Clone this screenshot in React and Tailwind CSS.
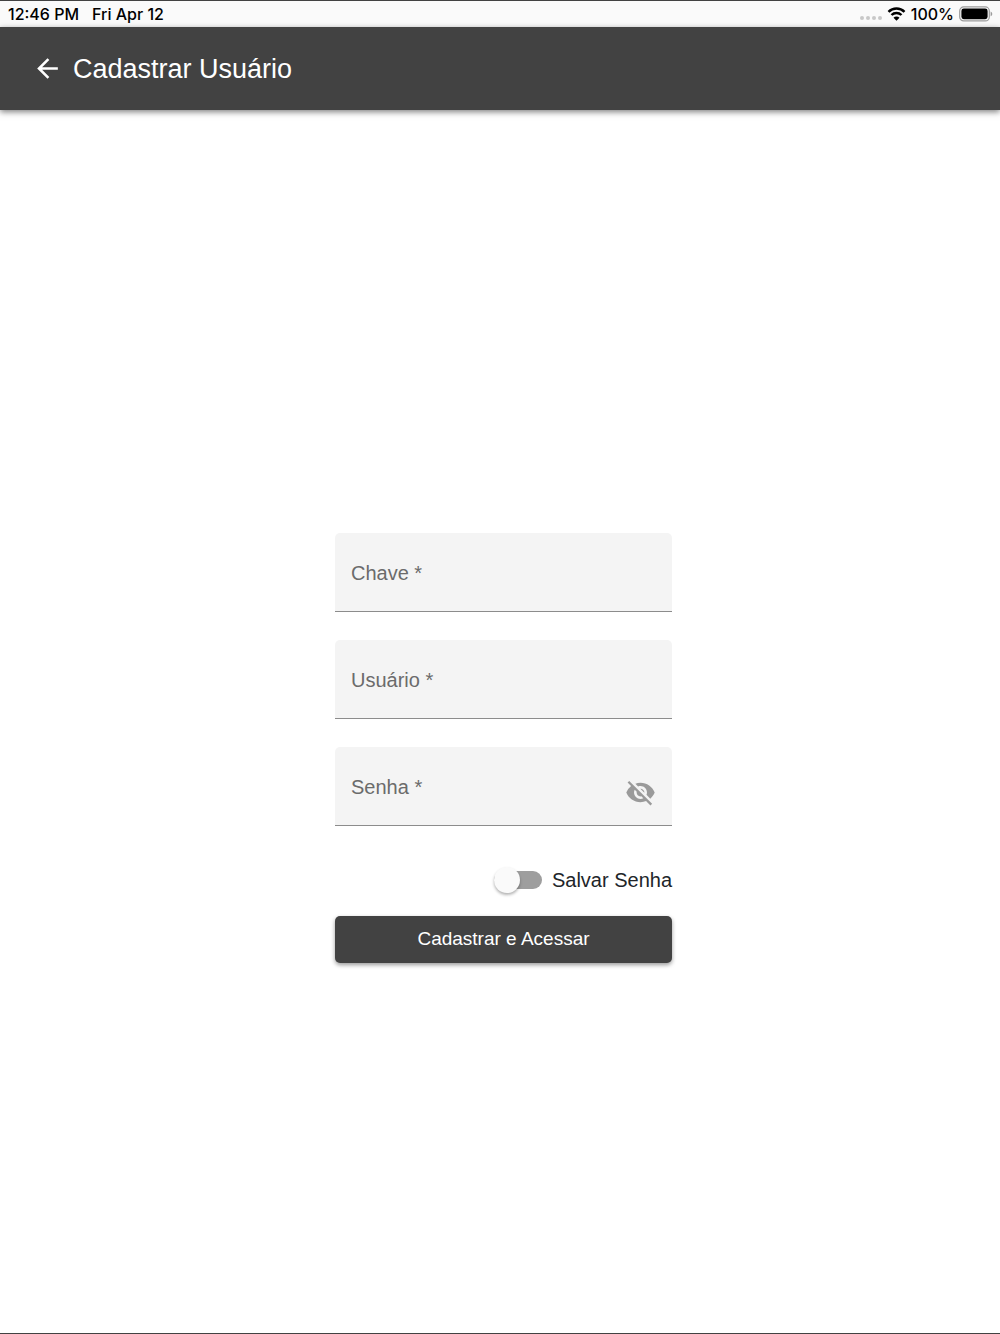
import { useState } from 'react';
import { MdArrowBack, MdVisibility, MdVisibilityOff } from 'react-icons/md';

/**
 * Tablet status bar: clock, signal, wifi and battery
 */
function StatusBar() {
  return (
    <div className="flex h-[26px] items-center justify-between bg-[#fafafa] pl-2 pr-[7px] font-['Inter',sans-serif] text-base font-medium leading-5 text-black">
      <div className="flex gap-[13px]">
        <span>12:46 PM</span>
        <span>Fri Apr 12</span>
      </div>

      <div className="flex items-center gap-[5px]">
        {/* Signal */}
        <svg width="22" height="14" viewBox="0 0 22 14" fill="#c8c8c8" aria-hidden="true">
          <circle cx="2" cy="11" r="2" />
          <circle cx="8" cy="11" r="2" />
          <circle cx="14" cy="11" r="2" />
          <circle cx="20" cy="11" r="2" />
        </svg>

        {/* Wifi */}
        <svg width="19" height="14" viewBox="0 0 18 14" fill="none" stroke="#000" aria-hidden="true">
          <path d="M1 4.9a11.3 11.3 0 0 1 16 0" strokeWidth="2.5" />
          <path d="M4 8a7.1 7.1 0 0 1 10 0" strokeWidth="2.4" />
          <path d="M9 13.8 6 10.7a4.2 4.2 0 0 1 6 0z" fill="#000" stroke="none" />
        </svg>

        <span>100%</span>

        {/* Battery */}
        <svg width="34" height="16" viewBox="0 0 34 16" aria-hidden="true">
          <rect x="0.7" y="0.9" width="29.6" height="14" rx="4" fill="none" stroke="#9c9c9c" strokeWidth="1.2" />
          <rect x="2.4" y="2.6" width="26.2" height="10.6" rx="2.4" fill="#000" />
          <path d="M31.6 5.5c2.2.8 2.2 4 0 4.8z" fill="#9c9c9c" />
        </svg>
      </div>
    </div>
  );
}

/**
 * Filled text field with a floating label
 * @param {Object} props
 * @param {string} props.id - Input id
 * @param {string} props.label - Field label
 * @param {string} props.type - Input type
 * @param {React.ReactNode} props.children - Suffix shown on the right
 */
function TextField({ id, label, type = 'text', children }) {
  return (
    <div className="relative flex h-[79px] items-center rounded-t-[5px] border-b border-[#8c8c8c] bg-[#f4f4f4] px-4">
      <input
        id={id}
        name={id}
        type={type}
        required
        placeholder=" "
        className="peer h-full min-w-0 flex-1 bg-transparent pt-6 text-xl text-black/85 outline-none"
      />
      <label
        htmlFor={id}
        className="pointer-events-none absolute left-4 top-3 text-base leading-6 text-[#6b6b6b] transition-all peer-placeholder-shown:top-7 peer-placeholder-shown:text-xl peer-placeholder-shown:leading-6 peer-focus:top-3 peer-focus:text-base"
      >
        {label} *
      </label>
      {children}
    </div>
  );
}

export default function App() {
  const [showPassword, setShowPassword] = useState(false);
  const [savePassword, setSavePassword] = useState(false);

  return (
    <div className="flex min-h-screen flex-col border-y border-[#424242] bg-white font-['Liberation_Sans',Arial,sans-serif]">
      <StatusBar />

      {/* Toolbar */}
      <header className="flex h-[83px] items-center gap-[10px] bg-[#424242] px-8 text-white shadow-[0_2px_6px_rgba(0,0,0,0.5)]">
        <button type="button" aria-label="Voltar">
          <MdArrowBack size={31} />
        </button>
        <h1 className="text-[27px] font-normal leading-8">Cadastrar Usuário</h1>
      </header>

      <main className="flex flex-1 items-center justify-center pl-[7px] pt-[53px]">
        <form className="flex w-[337px] flex-col gap-7" onSubmit={(e) => e.preventDefault()}>
          <TextField id="chave" label="Chave" />
          <TextField id="usuario" label="Usuário" />
          <TextField id="senha" label="Senha" type={showPassword ? 'text' : 'password'}>
            <button
              type="button"
              aria-label="Mostrar senha"
              onClick={() => setShowPassword(!showPassword)}
              className="mt-3 text-[#9a9a9a]"
            >
              {showPassword ? <MdVisibility size={31} /> : <MdVisibilityOff size={31} />}
            </button>
          </TextField>

          {/* Save password toggle */}
          <label className="mt-3 flex cursor-pointer items-center gap-[10px] self-end text-xl leading-7 text-[#212529]">
            <input
              type="checkbox"
              checked={savePassword}
              onChange={(e) => setSavePassword(e.target.checked)}
              className="peer sr-only"
            />
            <span className="flex h-[18px] w-12 items-center rounded-full bg-[#9e9e9e] peer-checked:justify-end peer-checked:bg-[#424242]">
              <span className="size-[26px] rounded-full bg-[#fafafa] shadow-[0_2px_3px_rgba(0,0,0,0.3)]" />
            </span>
            Salvar Senha
          </label>

          <button
            type="submit"
            className="-mt-[6px] h-[47px] rounded-[5px] bg-[#424242] text-[19px] font-normal text-white shadow-[0_2px_4px_rgba(0,0,0,0.4)]"
          >
            Cadastrar e Acessar
          </button>
        </form>
      </main>
    </div>
  );
}
